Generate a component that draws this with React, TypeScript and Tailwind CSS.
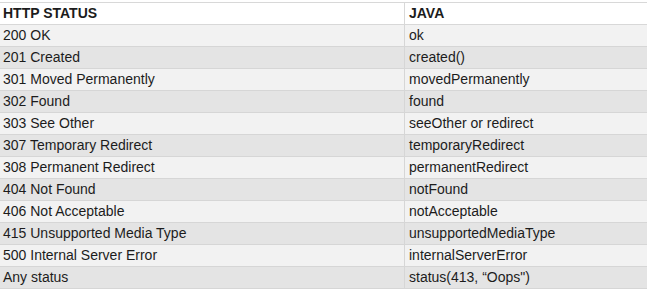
const rows: [string, string][] = [
  ["200 OK", "ok"],
  ["201 Created", "created()"],
  ["301 Moved Permanently", "movedPermanently"],
  ["302 Found", "found"],
  ["303 See Other", "seeOther or redirect"],
  ["307 Temporary Redirect", "temporaryRedirect"],
  ["308 Permanent Redirect", "permanentRedirect"],
  ["404 Not Found", "notFound"],
  ["406 Not Acceptable", "notAcceptable"],
  ["415 Unsupported Media Type", "unsupportedMediaType"],
  ["500 Internal Server Error", "internalServerError"],
  ["Any status", "status(413, \u201cOops\")"],
];

export default function App() {
  return (
    <div className="w-[647px] h-[289px] bg-white pt-[2px] font-['Liberation_Sans',Arial,sans-serif] text-[14px] text-[#1c1c1c]">
      <div className="grid grid-cols-[405px_1fr] border-t border-[#d8d8d8]">
        <div className="h-[22px] pl-[3px] leading-[21px] font-bold border-b border-r border-[#d8d8d8]">HTTP STATUS</div>
        <div className="h-[22px] pl-[4px] leading-[21px] font-bold border-b border-[#d8d8d8]">JAVA</div>
        {rows.map(([status, java], i) => {
          const bg = i % 2 === 0 ? "bg-[#f2f2f2]" : "bg-[#e4e4e4]";
          return [
            <div key={`s${i}`} className={`h-[22px] pl-[3px] leading-[21px] border-b border-r border-[#d6d6d6] ${bg}`}>
              {status}
            </div>,
            <div key={`j${i}`} className={`h-[22px] pl-[4px] leading-[21px] border-b border-[#d6d6d6] ${bg}`}>
              {java}
            </div>,
          ];
        })}
      </div>
    </div>
  );
}
